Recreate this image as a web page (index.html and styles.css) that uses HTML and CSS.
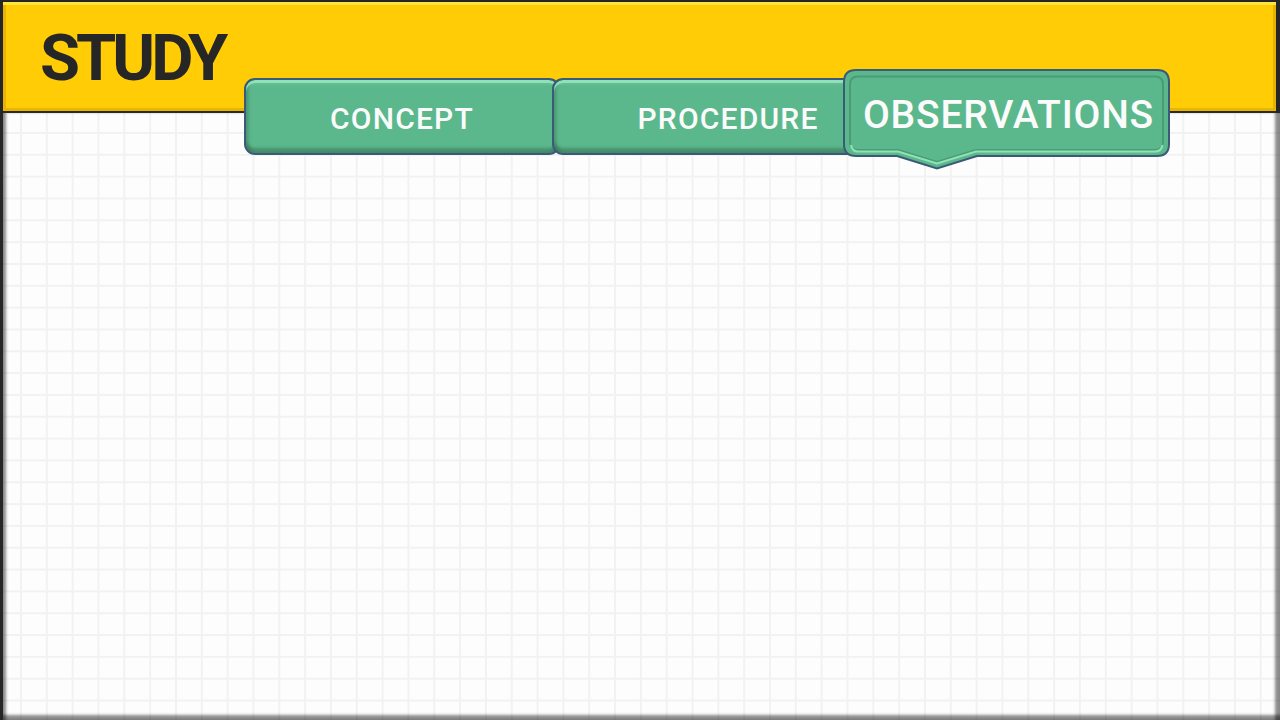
FILE: index.html
```html
<!DOCTYPE html>
<html>
<head>
<meta charset="utf-8">
<link rel="stylesheet" href="styles.css">
</head>
<body>
<div class="screen">
  <header class="header">
    <h1 class="title">STUDY</h1>
  </header>
  <main class="board"></main>
  <nav class="tabs">
    <div class="tab tab-concept">CONCEPT</div>
    <div class="tab tab-procedure">PROCEDURE</div>
    <div class="tab-active">
      <svg class="tab-shape" width="328" height="102" viewBox="0 0 328 102">
        <path d="M13 1 H314 Q326 1 326 13 V75 Q326 87 314 87 H134 L94 99.5 L54 87 H13 Q1 87 1 75 V13 Q1 1 13 1 Z" fill="#5bb88c" stroke="#3b5a78" stroke-width="2"/>
        <path d="M15 7.5 H312 Q320 7.5 320 15.5 V73 Q320 81 312 81 H133 L94 93 L55 81 H15 Q7 81 7 73 V15.5 Q7 7.5 15 7.5 Z" fill="none" stroke="#4a9c74" stroke-width="2"/>
        <path d="M8 76 Q9 82.5 15 82.5 H55 L94 94.5 L133 82.5 H312 Q318.5 82.5 319.5 76" fill="none" stroke="#8fe2b6" stroke-width="2"/>
      </svg>
      <span class="tab-active-label">OBSERVATIONS</span>
    </div>
  </nav>
</div>
</body>
</html>
```
FILE: styles.css
```css
* { box-sizing: border-box; }
html, body { margin: 0; padding: 0; }
body { background: #222; }

.screen {
  position: relative;
  width: 1280px;
  height: 720px;
  display: flex;
  flex-direction: column;
  background: #262626;
  padding: 2px 0 0 3px;
  overflow: hidden;
}

.header {
  height: 111px;
  margin-right: 4px;
  background: #ffcc05;
  border-bottom: 2px solid #2a2a2a;
  box-shadow: inset 0 3px 0 #ffe63c, inset 3px 0 0 #e9b500, inset -3px 0 0 #e6b300, inset 0 -3px 0 #e8b600;
  padding: 24px 0 0 37px;
}

.title {
  margin: 0;
  font-family: "Roboto", "Liberation Sans", sans-serif;
  font-weight: 700;
  font-size: 65px;
  line-height: 64px;
  letter-spacing: -4px;
  color: #262626;
}

.board {
  flex: 1;
  background-color: #fdfdfd;
  background-image:
    linear-gradient(to right, #f2f2f2 2px, transparent 2px),
    linear-gradient(to bottom, #f2f2f2 2px, transparent 2px);
  background-size: 25.83px 21.83px;
  background-position: 17px 19px;
  box-shadow:
    inset 4px 0 3px -1px rgba(0,0,0,0.45),
    inset -7px 0 3px -2px rgba(0,0,0,0.45),
    inset 0 -7px 3px -2px rgba(0,0,0,0.45);
}

.tabs {
  position: absolute;
  left: 244px;
  top: 69px;
  display: flex;
  align-items: flex-start;
}

.tab {
  position: relative;
  margin-top: 9px;
  height: 77px;
  display: flex;
  align-items: center;
  justify-content: center;
  background: #5bb88c;
  border: 2px solid #3b5a78;
  border-radius: 11px;
  box-shadow:
    inset 0 3px 0 #8fe2b6,
    inset 0 5px 2px rgba(255,255,255,0.08),
    inset 0 -5px 3px rgba(0,0,0,0.22),
    inset 4px 0 3px -1px rgba(0,0,0,0.12),
    inset -4px 0 3px -1px rgba(0,0,0,0.12);
  font-family: "Roboto", "Liberation Sans", sans-serif;
  font-weight: 500;
  font-size: 30px;
  letter-spacing: 1.2px;
  color: #fbfbfb;
  padding-top: 3px;
}

.tab-concept { width: 316px; }
.tab-procedure { width: 350px; margin-left: -8px; padding-left: 2px; }

.tab-active {
  position: relative;
  width: 328px;
  height: 102px;
  margin-left: -59px;
  display: flex;
  justify-content: center;
  padding-top: 24px;
  padding-left: 3px;
}

.tab-shape {
  position: absolute;
  left: 0;
  top: 0;
}

.tab-active-label {
  position: relative;
  font-family: "Roboto", "Liberation Sans", sans-serif;
  font-weight: 500;
  font-size: 39px;
  line-height: 44px;
  letter-spacing: 0.8px;
  color: #fbfbfb;
}
```
